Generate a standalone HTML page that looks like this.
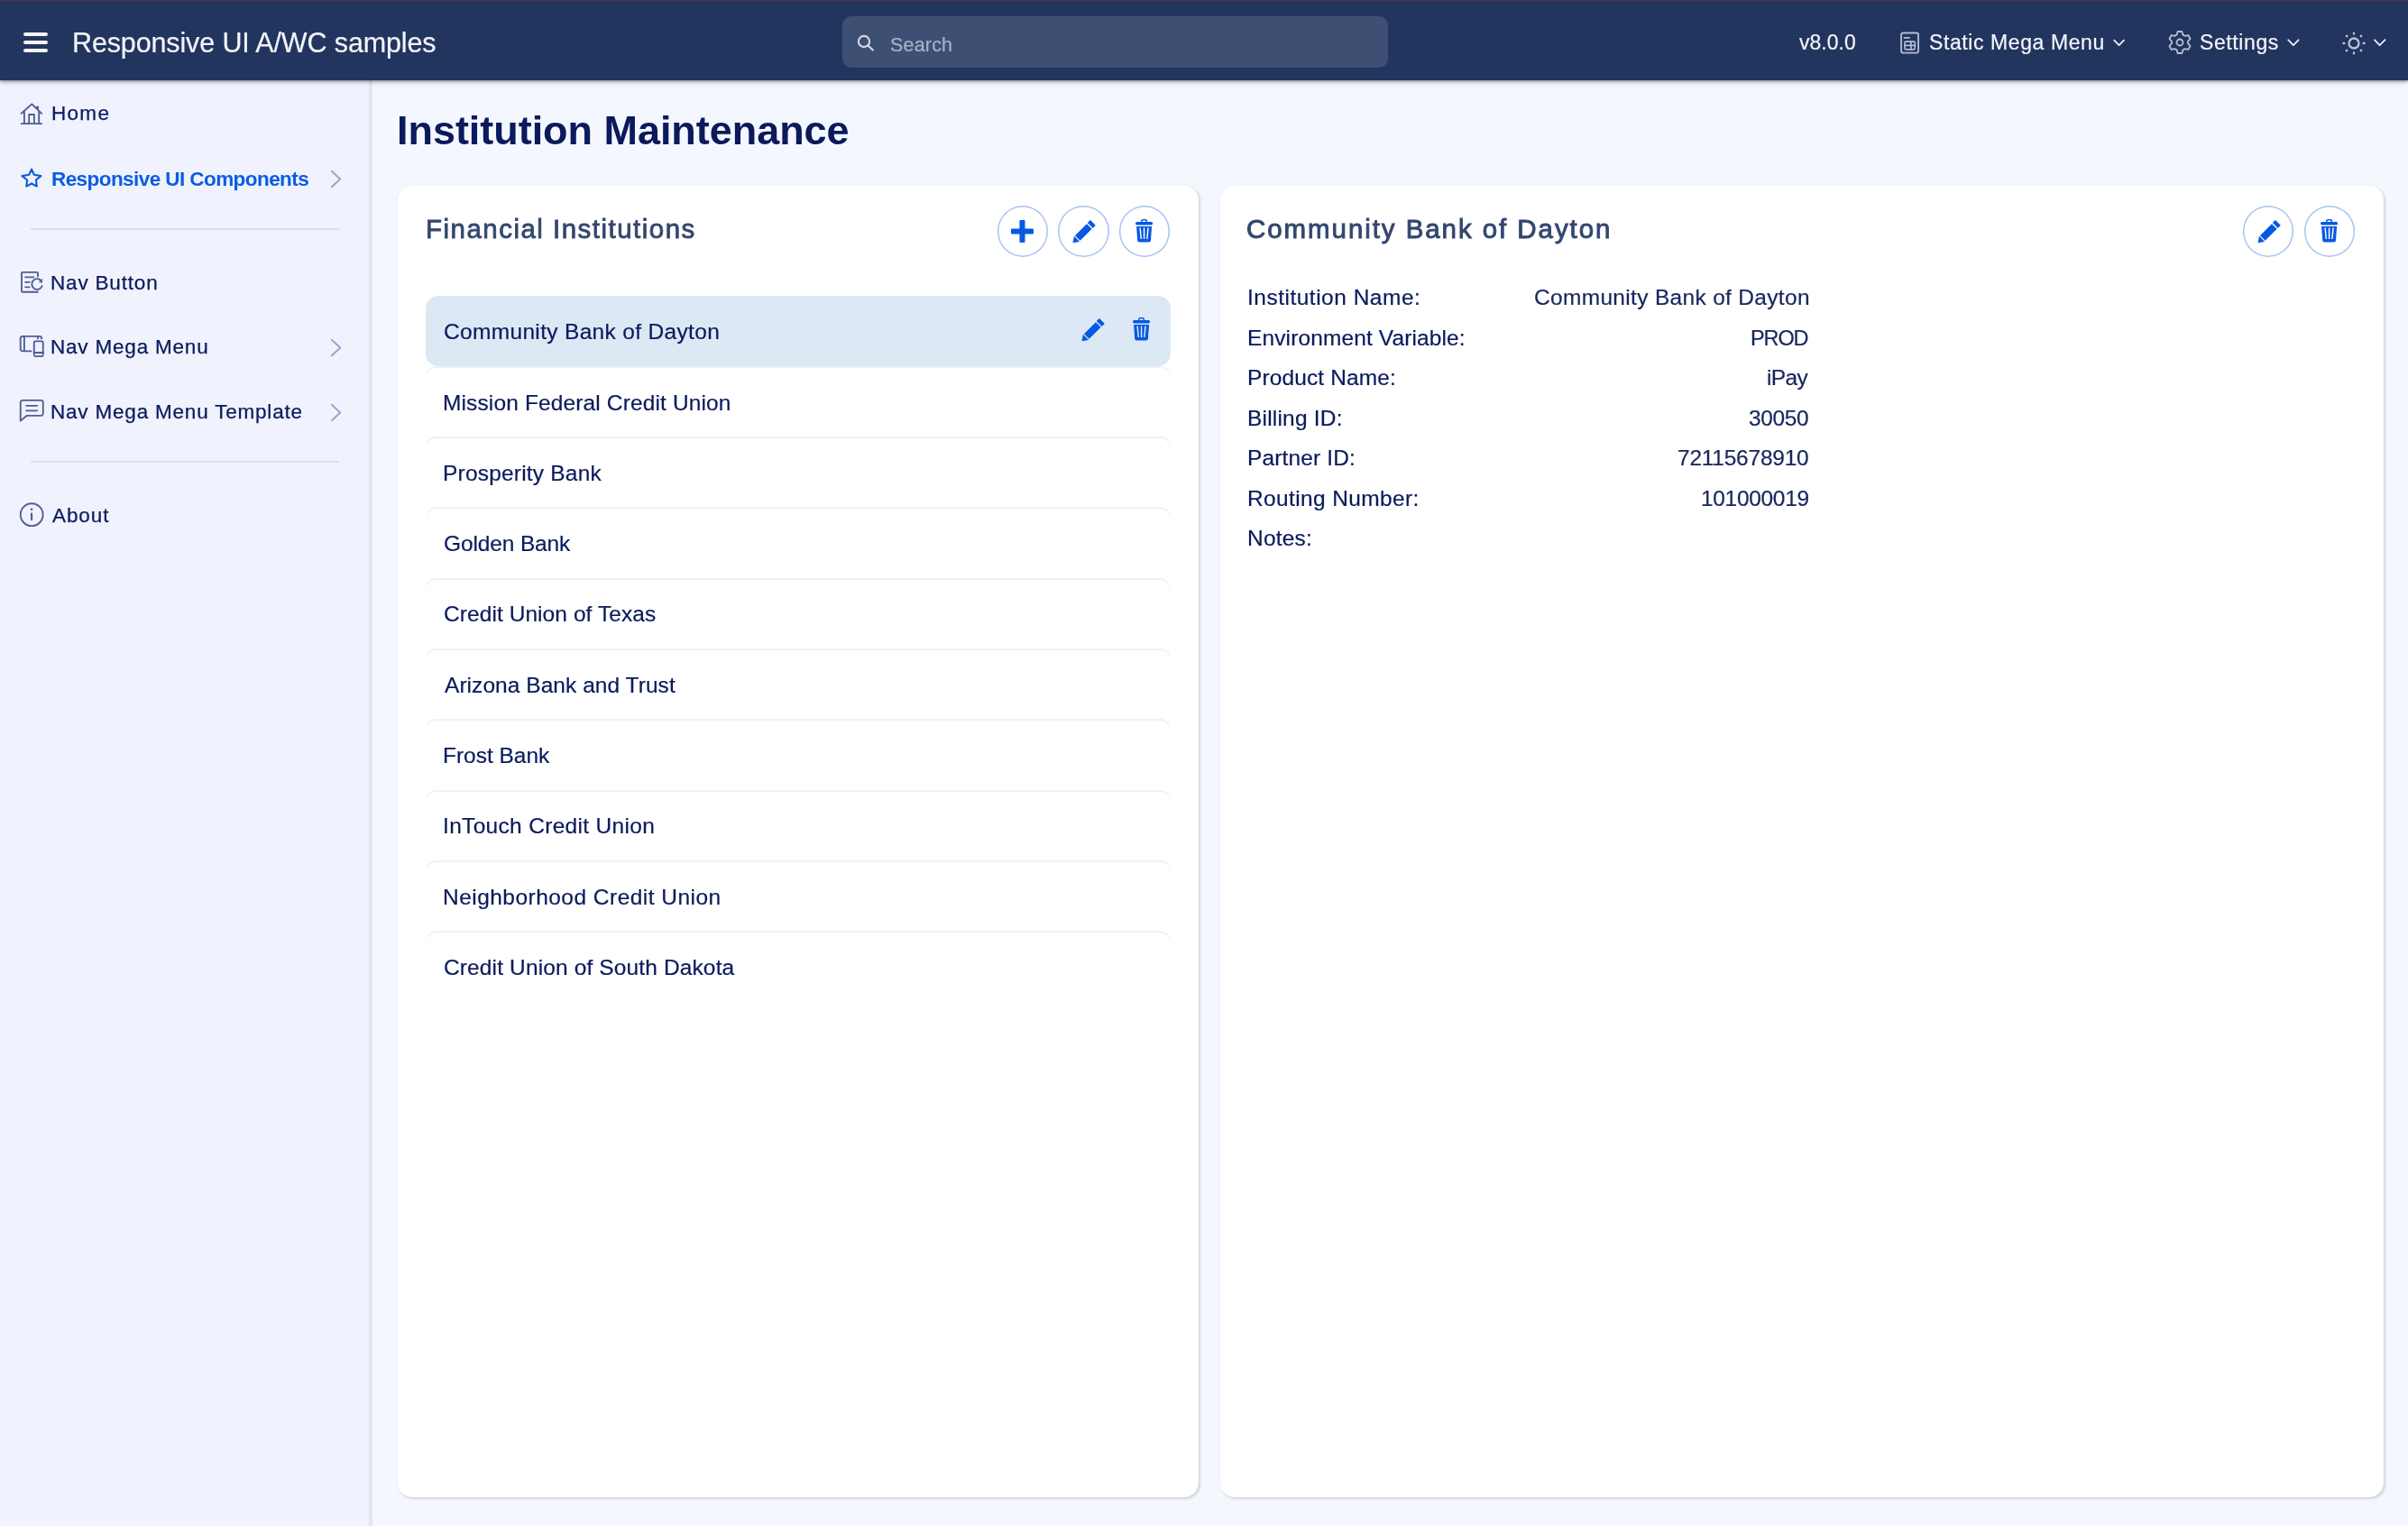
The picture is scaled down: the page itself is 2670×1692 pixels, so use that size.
<!DOCTYPE html>
<html lang="en">
<head>
<meta charset="utf-8">
<title>Institution Maintenance</title>
<style>
*{box-sizing:border-box;margin:0;padding:0}
html,body{width:2670px;height:1692px;overflow:hidden}
body{font-family:"Liberation Sans",sans-serif;background:#f5f7fe;color:#0a1a5c;position:relative;line-height:1}
svg{display:block;overflow:visible;position:absolute}
ul{list-style:none}
.t{position:absolute;white-space:nowrap;line-height:1;margin-top:1px;will-change:transform}
/* ---------- header ---------- */
header{position:absolute;left:0;top:0;width:2670px;height:88.5px;background:#22355f;box-shadow:inset 0 1px 0 #4b3549,0 1px 2px rgba(0,0,0,.25),0 2px 5px rgba(0,0,0,.3);z-index:5;color:#f3f4f8}
header .t{-webkit-text-stroke:.2px}
.burger{position:absolute;left:25.5px;top:35.5px;width:27.5px;height:22px}
.burger i{position:absolute;left:0;width:27.5px;height:4px;border-radius:2px;background:#f3f3f5}
.search{position:absolute;left:934px;top:18px;width:605px;height:57px;border-radius:10px;background:#3e4f74}
/* ---------- sidebar ---------- */
nav{position:absolute;left:0;top:0;width:413px;height:1692px;background:#f0f2fd;border-right:4px solid #e4e6ee}
nav .t{font-size:22.5px;color:#0a1a5c;-webkit-text-stroke:.25px}
nav .t.active{color:#0b5ce2;font-weight:bold;-webkit-text-stroke:0;font-size:22.5px}
nav hr{position:absolute;left:34px;width:342px;height:2px;border:0;background:#d8dff0}
/* ---------- main ---------- */
main{position:absolute;left:0;top:0;width:2670px;height:1692px}
h1{font-size:45px;font-weight:bold;color:#0a1a5c;letter-spacing:-.04px;left:439.5px;top:120.8px}
.card{position:absolute;top:206px;height:1454px;background:#fff;border-radius:16px;box-shadow:-1px -1px 1px #eef1fc,1.5px 1.5px 2.5px rgba(80,90,120,.21)}
.card h2{color:#33476f}
.rbtn{position:absolute;top:22px;width:56.6px;height:56.6px;border-radius:50%;box-shadow:inset 0 0 0 1.5px #a8c2f2;background:#fff}
#list{left:441px;width:888px}
#detail{left:1352.5px;width:1290.5px}
#list ul{position:absolute;left:31px;top:121.5px;width:825.5px}
#list li{position:relative;height:78.3px;border-radius:12px;box-shadow:inset 0 2px 0 #edf1fc;font-size:24.5px;color:#0a1a5c;background:#fff}
#list li.sel{background:#dde8f5;box-shadow:none;border-radius:14px}
#list li span{position:absolute;top:28.8px;white-space:nowrap;line-height:1;will-change:transform;-webkit-text-stroke:.2px #0a1a5c}
dl{position:absolute;left:0;top:0;font-size:24.5px;color:#0a1a5c}
dl dt,dl dd{position:absolute;white-space:nowrap;line-height:1;margin-top:.5px;will-change:transform;-webkit-text-stroke:.2px}
dl dt{left:30.4px}
dl dd{color:#16265c}
</style>
</head>
<body>

<nav>
  <!-- Home -->
  <svg style="left:22px;top:113px" width="26" height="26" viewBox="0 0 26 26" fill="none" stroke="#4f5c94" stroke-width="1.85" stroke-linecap="round" stroke-linejoin="round"><path d="M1.7 12.8 13.3 2.4 24.2 12.8M4.9 10.4V24.1M21.2 10.4V24.1M1.7 24.1H24.2M10.2 24.1V14H15.9V24.1"/><path d="M18.2 4.8H20.9V9.3L18.2 6.8Z" fill="#4f5c94" stroke="none"/></svg>
  <span class="t" style="left:56.6px;top:114.4px;letter-spacing:1.3px">Home</span>
  <!-- Responsive UI Components -->
  <svg style="left:22px;top:185px" width="26" height="24" viewBox="0 0 26 24" fill="none" stroke="#0b5ce2" stroke-width="2.1" stroke-linejoin="round"><path d="M13.05 2.7 15.8 8.8 23.4 10.1 17.9 14.5 18.8 21.6 13.05 18.5 7.3 21.6 8.1 14.5 2.4 10.1 10.2 8.8Z"/></svg>
  <span class="t active" style="left:57.1px;top:186.95px;letter-spacing:-.57px">Responsive UI Components</span>
  <svg style="left:366px;top:188px" width="14" height="22" viewBox="0 0 14 22" fill="none" stroke="#9da7ca" stroke-width="2.1" stroke-linecap="round" stroke-linejoin="round"><path d="M1.9 1.8 11.2 10.5 1.9 19.2"/></svg>
  <hr style="top:252.5px">
  <!-- Nav Button -->
  <svg style="left:22px;top:299px" width="28" height="28" viewBox="0 0 28 28" fill="none" stroke="#4f5c94" stroke-width="1.85" stroke-linecap="round" stroke-linejoin="round"><path d="M20 7.6V3.8a1 1 0 0 0-1-1H3a1 1 0 0 0-1 1V23.7a1 1 0 0 0 1 1H19.9M6.1 8.3H15.5M6.1 13.8H10.8M6.1 19.3H10.6M23.5 12A5.9 5.9 0 1 0 24.74 18"/><path d="M24.7 10.5V14.4L21.5 13.7Z" fill="#4f5c94" stroke-width=".5"/></svg>
  <span class="t" style="left:56.4px;top:301.9px;letter-spacing:.82px">Nav Button</span>
  <!-- Nav Mega Menu -->
  <svg style="left:20px;top:370px" width="30" height="28" viewBox="0 0 30 28" fill="none" stroke="#4f5c94" stroke-width="1.85" stroke-linecap="round" stroke-linejoin="round"><path d="M26.05 5.4V5a2.2 2.2 0 0 0-2.2-2.2H5.2a2.5 2.5 0 0 0-2.5 2.5V16.8a2.5 2.5 0 0 0 2.5 2.5H14.65M6.9 2.8V19.3M22 2.8V5.4"/><rect x="17.8" y="8.3" width="9.96" height="16.75" rx="1.5"/><path d="M17.8 21H27.76" stroke-width="2.2"/></svg>
  <span class="t" style="left:56.4px;top:372.6px;letter-spacing:.8px">Nav Mega Menu</span>
  <svg style="left:366px;top:374.5px" width="14" height="22" viewBox="0 0 14 22" fill="none" stroke="#9da7ca" stroke-width="2.1" stroke-linecap="round" stroke-linejoin="round"><path d="M1.9 1.8 11.2 10.5 1.9 19.2"/></svg>
  <!-- Nav Mega Menu Template -->
  <svg style="left:20px;top:441px" width="30" height="28" viewBox="0 0 30 28" fill="none" stroke="#4f5c94" stroke-width="1.85" stroke-linecap="round" stroke-linejoin="round"><path d="M2.73 25.6V5.2a2.3 2.3 0 0 1 2.3-2.3H25.46a2.3 2.3 0 0 1 2.3 2.3V17.5a2.3 2.3 0 0 1-2.3 2.3H9.9ZM9.15 8.8H21.2M9.15 14.3H21.2"/></svg>
  <span class="t" style="left:56.4px;top:444.6px;letter-spacing:.8px">Nav Mega Menu Template</span>
  <svg style="left:366px;top:446.5px" width="14" height="22" viewBox="0 0 14 22" fill="none" stroke="#9da7ca" stroke-width="2.1" stroke-linecap="round" stroke-linejoin="round"><path d="M1.9 1.8 11.2 10.5 1.9 19.2"/></svg>
  <hr style="top:510.5px">
  <!-- About -->
  <svg style="left:20px;top:556px" width="30" height="30" viewBox="0 0 30 30" fill="none" stroke="#4f5c94" stroke-width="1.85" stroke-linecap="round"><circle cx="15.18" cy="14.7" r="12.45"/><path d="M15.05 13.7V20.1" stroke-width="2.2"/><circle cx="15.05" cy="8.8" r="1.3" fill="#4f5c94" stroke="none"/></svg>
  <span class="t" style="left:58.2px;top:559.8px;letter-spacing:.9px">About</span>
</nav>

<header>
  <div class="burger"><i style="top:0"></i><i style="top:9px"></i><i style="top:18px"></i></div>
  <span class="t" style="left:79.6px;top:31.2px;font-size:30.5px;letter-spacing:-.13px">Responsive UI A/WC samples</span>
  <div class="search">
    <svg style="left:15px;top:19.5px" width="22" height="22" viewBox="0 0 22 22" fill="none" stroke="#d6dae5" stroke-width="2.1" stroke-linecap="round"><circle cx="9" cy="8" r="6.1"/><path d="M13.4 12.4 18.9 17.6"/></svg>
    <span class="t" style="left:52.6px;top:20.6px;font-size:21.5px;letter-spacing:.18px;color:#a9b2c8">Search</span>
  </div>
  <span class="t" style="left:1994.6px;top:34.8px;font-size:23px;letter-spacing:.02px">v8.0.0</span>
  <!-- table icon -->
  <svg style="left:2105px;top:33px" width="26" height="30" viewBox="0 0 26 30" fill="none" stroke="#b4bdd3" stroke-width="1.85" stroke-linecap="round" stroke-linejoin="round"><rect x="3.1" y="3.5" width="19" height="22.1" rx="2.2"/><path d="M6.4 8.95H12" stroke-width="1.7"/><rect x="7" y="13.2" width="11.3" height="8.6" rx="1.2" stroke-width="1.7"/><path d="M13.9 13.2V21.8M7 17.35H18.3" stroke-width="1.7"/></svg>
  <span class="t" style="left:2138.9px;top:34.8px;font-size:23px;letter-spacing:.59px">Static Mega Menu</span>
  <svg style="left:2342px;top:42px" width="16" height="11" viewBox="0 0 16 11" fill="none" stroke="#eceef4" stroke-width="1.8" stroke-linecap="round" stroke-linejoin="round"><path d="M2.2 2.6 7.6 8.2 13 2.6"/></svg>
  <!-- gear -->
  <svg style="left:2403.9px;top:33.96px" width="26" height="26" viewBox="0 0 26 26" fill="none" stroke="#b9c0d4" stroke-width="1.8" stroke-linejoin="round"><path d="M9.50 4.60 L10.70 1.00 L15.30 1.00 L16.50 4.60 L18.52 5.77 L22.24 5.01 L24.54 8.99 L22.02 11.83 L22.02 14.17 L24.54 17.01 L22.24 20.99 L18.52 20.23 L16.50 21.40 L15.30 25.00 L10.70 25.00 L9.50 21.40 L7.48 20.23 L3.76 20.99 L1.46 17.01 L3.98 14.17 L3.98 11.83 L1.46 8.99 L3.76 5.01 L7.48 5.77Z"/><circle cx="13" cy="13" r="3.5"/></svg>
  <span class="t" style="left:2439.2px;top:34.8px;font-size:23px;letter-spacing:.6px">Settings</span>
  <svg style="left:2535px;top:42px" width="16" height="11" viewBox="0 0 16 11" fill="none" stroke="#eceef4" stroke-width="1.8" stroke-linecap="round" stroke-linejoin="round"><path d="M2.3 2.3 7.9 8.2 13.6 2.3"/></svg>
  <!-- sun -->
  <svg style="left:2596.4px;top:33.5px" width="28" height="28" viewBox="-14 -14 28 28" fill="none" stroke="#bcc3d6" stroke-linecap="round"><circle r="5.5" stroke-width="2.3"/><path d="M0-11.4V-10.5M0 10.5V11.4M-11.6 0H-10.6M10.6 0H11.6" stroke-width="2.3"/><path d="M-7.8-7.8-8.1-8.1M7.8-7.8 8.1-8.1M-7.8 7.8-8.1 8.1M7.8 7.8 8.1 8.1" stroke-width="2.5"/></svg>
  <svg style="left:2631px;top:42px" width="16" height="11" viewBox="0 0 16 11" fill="none" stroke="#eceef4" stroke-width="1.8" stroke-linecap="round" stroke-linejoin="round"><path d="M2 2.3 7.6 8.2 13.6 2.2"/></svg>
</header>

<main>
  <h1 class="t">Institution Maintenance</h1>

  <section class="card" id="list">
    <h2 class="t" style="left:30.5px;top:31.5px;font-size:29.5px;font-weight:normal;letter-spacing:1.48px;-webkit-text-stroke:.8px #33476f">Financial Institutions</h2>
    <div class="rbtn" style="left:664.6px"><svg style="left:15.8px;top:15.6px" width="25" height="25" viewBox="0 0 25 25" fill="#0758e4"><rect x="0" y="9.45" width="25" height="6.1" rx="1.2"/><rect x="9.45" y="0" width="6.1" height="25" rx="1.2"/></svg></div>
    <div class="rbtn" style="left:732.1px"><svg style="left:15.7px;top:15.7px" width="26" height="26" viewBox="0 0 26 26" fill="#0758e4"><g transform="translate(0.6 25.2) rotate(-45)"><path d="M0.3 0 6.1-3.9V3.9Z" stroke="#0758e4" stroke-width=".5" stroke-linejoin="round"/><path d="M7.4-4H25.8V4H7.4Z"/><path d="M27.2-4.15H31V-4.15a.5.5 0 0 1 .5.5V3.65a.5.5 0 0 1-.5.5H27.2Z"/></g></svg></div>
    <div class="rbtn" style="left:799.7px"><svg style="left:18.5px;top:15.3px" width="19.2" height="25.6" viewBox="0 0 19.2 25.6" fill="#0758e4"><path d="M6.8 3.3V1.9a1.2 1.2 0 0 1 1.2-1.2h3.2a1.2 1.2 0 0 1 1.2 1.2V3.3" fill="none" stroke="#0758e4" stroke-width="1.4"/><rect x="0" y="2.9" width="19.2" height="3.7" rx="1.8"/><path fill-rule="evenodd" d="M1.1 7.9H18.1L17 23.6a2.1 2.1 0 0 1-2.1 2H4.3a2.1 2.1 0 0 1-2.1-2ZM4.4 9.6H5.9L7 22H5.6ZM8.85 9.6H10.35V22H8.85ZM13.3 9.6H14.8L13.6 22H12.2Z"/></svg></div>
    <ul>
      <li class="sel"><span style="left:20.3px;letter-spacing:.33px">Community Bank of Dayton</span><svg style="left:727px;top:25px" width="26" height="26" viewBox="0 0 26 26" fill="#0758e4"><g transform="translate(0.6 25.2) rotate(-45)"><path d="M0.3 0 6.1-3.9V3.9Z" stroke="#0758e4" stroke-width=".5" stroke-linejoin="round"/><path d="M7.4-4H25.8V4H7.4Z"/><path d="M27.2-4.15H31V-4.15a.5.5 0 0 1 .5.5V3.65a.5.5 0 0 1-.5.5H27.2Z"/></g></svg><svg style="left:783.6px;top:24.9px" width="19.2" height="25.6" viewBox="0 0 19.2 25.6" fill="#0758e4"><path d="M6.8 3.3V1.9a1.2 1.2 0 0 1 1.2-1.2h3.2a1.2 1.2 0 0 1 1.2 1.2V3.3" fill="none" stroke="#0758e4" stroke-width="1.4"/><rect x="0" y="2.9" width="19.2" height="3.7" rx="1.8"/><path fill-rule="evenodd" d="M1.1 7.9H18.1L17 23.6a2.1 2.1 0 0 1-2.1 2H4.3a2.1 2.1 0 0 1-2.1-2ZM4.4 9.6H5.9L7 22H5.6ZM8.85 9.6H10.35V22H8.85ZM13.3 9.6H14.8L13.6 22H12.2Z"/></svg></li>
      <li><span style="left:19.3px;letter-spacing:.13px">Mission Federal Credit Union</span></li>
      <li><span style="left:19.3px;letter-spacing:.2px">Prosperity Bank</span></li>
      <li><span style="left:20.3px;letter-spacing:-.13px">Golden Bank</span></li>
      <li><span style="left:20.3px;letter-spacing:.07px">Credit Union of Texas</span></li>
      <li><span style="left:20.8px;letter-spacing:.05px">Arizona Bank and Trust</span></li>
      <li><span style="left:19.3px;letter-spacing:-.02px">Frost Bank</span></li>
      <li><span style="left:19.3px;letter-spacing:.32px">InTouch Credit Union</span></li>
      <li><span style="left:19.3px;letter-spacing:.47px">Neighborhood Credit Union</span></li>
      <li><span style="left:20.3px;letter-spacing:.13px">Credit Union of South Dakota</span></li>
    </ul>
  </section>

  <section class="card" id="detail">
    <h2 class="t" style="left:29.9px;top:31.7px;font-size:29.5px;font-weight:normal;letter-spacing:1.93px;-webkit-text-stroke:.9px #33476f">Community Bank of Dayton</h2>
    <div class="rbtn" style="left:1134.4px"><svg style="left:15.7px;top:15.7px" width="26" height="26" viewBox="0 0 26 26" fill="#0758e4"><g transform="translate(0.6 25.2) rotate(-45)"><path d="M0.3 0 6.1-3.9V3.9Z" stroke="#0758e4" stroke-width=".5" stroke-linejoin="round"/><path d="M7.4-4H25.8V4H7.4Z"/><path d="M27.2-4.15H31V-4.15a.5.5 0 0 1 .5.5V3.65a.5.5 0 0 1-.5.5H27.2Z"/></g></svg></div>
    <div class="rbtn" style="left:1202px"><svg style="left:18.5px;top:15.3px" width="19.2" height="25.6" viewBox="0 0 19.2 25.6" fill="#0758e4"><path d="M6.8 3.3V1.9a1.2 1.2 0 0 1 1.2-1.2h3.2a1.2 1.2 0 0 1 1.2 1.2V3.3" fill="none" stroke="#0758e4" stroke-width="1.4"/><rect x="0" y="2.9" width="19.2" height="3.7" rx="1.8"/><path fill-rule="evenodd" d="M1.1 7.9H18.1L17 23.6a2.1 2.1 0 0 1-2.1 2H4.3a2.1 2.1 0 0 1-2.1-2ZM4.4 9.6H5.9L7 22H5.6ZM8.85 9.6H10.35V22H8.85ZM13.3 9.6H14.8L13.6 22H12.2Z"/></svg></div>
    <dl>
      <dt style="top:111.5px;letter-spacing:.5px">Institution Name:</dt><dd style="top:111.5px;left:348.1px;letter-spacing:.32px">Community Bank of Dayton</dd>
      <dt style="top:156px;letter-spacing:.12px">Environment Variable:</dt><dd style="top:157px;left:588.9px;letter-spacing:-1.1px;font-size:23.5px">PROD</dd>
      <dt style="top:200.5px;letter-spacing:.12px">Product Name:</dt><dd style="top:200.5px;left:606.5px;letter-spacing:-.67px">iPay</dd>
      <dt style="top:245px;letter-spacing:.2px">Billing ID:</dt><dd style="top:245px;left:586.9px;letter-spacing:-.35px">30050</dd>
      <dt style="top:289.5px;letter-spacing:.13px">Partner ID:</dt><dd style="top:289.5px;left:507.9px;letter-spacing:-.24px">72115678910</dd>
      <dt style="top:334px;letter-spacing:.36px">Routing Number:</dt><dd style="top:334px;left:533.1px;letter-spacing:-.32px">101000019</dd>
      <dt style="top:378.5px;letter-spacing:.2px">Notes:</dt><dd></dd>
    </dl>
  </section>
</main>
</body>
</html>
